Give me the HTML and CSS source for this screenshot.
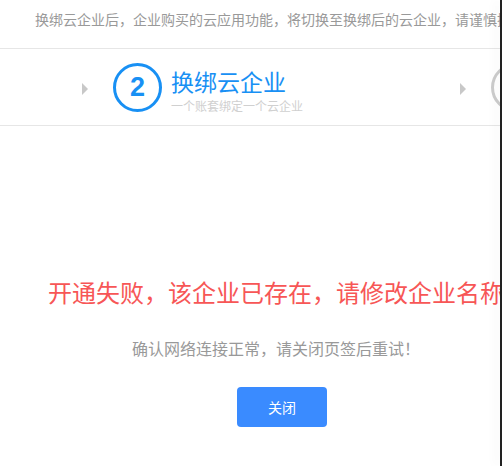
FILE: index.html
```html
<!DOCTYPE html>
<html lang="zh-CN">
<head>
    <meta charset="UTF-8">
    <meta name="viewport" content="width=device-width, initial-scale=1.0">
    <title>换绑云企业</title>
    <link rel="stylesheet" href="styles.css">
</head>
<body>

<div id="page">
    <div class="notice">换绑云企业后，企业购买的云应用功能，将切换至换绑后的云企业，请谨慎操作</div>

    <div class="steps">
        <span class="arrow arrow-first"></span>
        <div class="step active">
            <div class="step-num">2</div>
            <div class="step-text">
                <div class="step-title">换绑云企业</div>
                <div class="step-desc">一个账套绑定一个云企业</div>
            </div>
        </div>
        <span class="arrow"></span>
        <div class="step">
            <div class="step-num">3</div>
        </div>
    </div>

    <div class="result">
        <div class="result-title">开通失败，该企业已存在，请修改企业名称</div>
        <div class="result-tip">确认网络连接正常，请关闭页签后重试！</div>
        <button class="close-button">关闭</button>
    </div>
</div>

<div class="edge"></div>

</body>
</html>
```

FILE: styles.css
```css
html, body {
    margin: 0;
    overflow: hidden;
}
body {
    font-family: "Noto Sans CJK SC", "Noto Sans", sans-serif;
    background-color: #fff;
    width: 502px;
    height: 466px;
}
#page {
    width: 552px;
}
.notice {
    height: 48px;
    line-height: 38px;
    padding-left: 35px;
    font-size: 14px;
    color: #999;
    white-space: nowrap;
    border-bottom: 1px solid #e6e6e6;
}
.steps {
    display: flex;
    align-items: center;
    height: 76px;
    border-bottom: 1px solid #e6e6e6;
}
.arrow {
    width: 0;
    height: 0;
    border-left: 6px solid #c8c8c8;
    border-top: 6px solid transparent;
    border-bottom: 6px solid transparent;
    margin-left: 26px;
    margin-top: 4px;
}
.arrow-first {
    margin-left: 82px;
}
.step {
    display: flex;
    align-items: center;
    margin-left: 25px;
}
.step.active {
    width: 321px;
}
.step-num {
    box-sizing: border-box;
    width: 49px;
    height: 49px;
    flex-shrink: 0;
    border: 3px solid #ccc;
    border-radius: 50%;
    display: flex;
    align-items: center;
    justify-content: center;
    font-family: "Liberation Sans", Arial, sans-serif;
    font-size: 27px;
    font-weight: bold;
    color: #ccc;
}
.step.active .step-num {
    border-color: #1890f4;
    color: #1890f4;
}
.step-text {
    margin-left: 9px;
    margin-top: 8px;
}
.step-title {
    font-size: 23px;
    line-height: 30px;
    color: #1890f4;
}
.step-desc {
    font-size: 12px;
    line-height: 20px;
    color: #d0d0d0;
    white-space: nowrap;
}
.result {
    display: flex;
    flex-direction: column;
    align-items: center;
    padding-top: 150px;
}
.result-title {
    font-size: 24px;
    line-height: 32px;
    color: #f75656;
    white-space: nowrap;
}
.result-tip {
    margin-top: 28px;
    font-size: 16px;
    line-height: 24px;
    color: #999;
}
.close-button {
    margin-top: 27px;
    margin-left: 12px;
    width: 90px;
    height: 40px;
    border: none;
    border-radius: 4px;
    background-color: #3a8bff;
    color: #fff;
    font-family: "Noto Sans CJK SC", sans-serif;
    font-size: 14px;
    cursor: pointer;
}
.edge {
    position: fixed;
    top: 0;
    right: 0;
    width: 2px;
    height: 100%;
    background-color: #222;
    box-shadow: -4px 0 10px rgba(0, 0, 0, 0.08);
}
```
